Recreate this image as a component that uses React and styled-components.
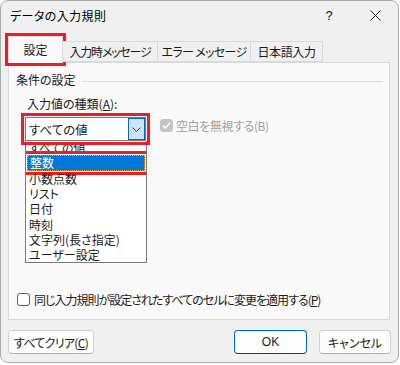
import React from 'react';
import styled, { createGlobalStyle } from 'styled-components';

const GlobalStyle = createGlobalStyle`
  * { box-sizing: border-box; }
  html, body { margin: 0; padding: 0; background: #ffffff; }
  body {
    font-family: "Noto Sans CJK JP", "Noto Sans", sans-serif;
    font-size: 12px;
    color: #1a1a1a;
    font-feature-settings: "palt";
  }
`;

const items = ['すべての値', '整数', '小数点数', 'リスト', '日付', '時刻', '文字列(長さ指定)', 'ユーザー設定'];
const tabs = [
  { label: '設定', w: 55, tight: 0 },
  { label: '入力時メッセージ', w: 96, tight: 1.2 },
  { label: 'エラー メッセージ', w: 94, tight: 0.7 },
  { label: '日本語入力', w: 73, tight: 0.4 },
];

const App = () => {
  return (
    <>
      <GlobalStyle />
      <Dialog>
        <TitleBar>
          <Title>データの入力規則</Title>
          <TitleButton>?</TitleButton>
          <TitleButton>
            <svg width="11" height="11" viewBox="0 0 11 11">
              <path d="M0.5 0.5 L10.5 10.5 M10.5 0.5 L0.5 10.5" stroke="#1a1a1a" strokeWidth="1" />
            </svg>
          </TitleButton>
        </TitleBar>

        <TabStrip>
          {tabs.map((t, i) => (
            <Tab key={t.label} $active={i === 0} $w={t.w} $tight={t.tight}>{t.label}</Tab>
          ))}
        </TabStrip>

        <Panel>
          <GroupHeader>
            <span>条件の設定</span>
            <GroupLine />
          </GroupHeader>

          <Indent>
            <FieldLabel>入力値の種類(<u>A</u>):</FieldLabel>
            <FieldRow>
              <ComboColumn>
                <Combo>
                  <ComboText>すべての値</ComboText>
                  <DropButton>
                    <svg width="9" height="5" viewBox="0 0 9 5">
                      <path d="M0.5 0.5 L4.5 4.5 L8.5 0.5" stroke="#3a3a3a" fill="none" strokeWidth="1" />
                    </svg>
                  </DropButton>
                </Combo>
                <ListBox>
                  <ListInner>
                    {items.map((it, i) => (
                      <ListItem key={it} $selected={i === 1}>{it}</ListItem>
                    ))}
                  </ListInner>
                </ListBox>
              </ComboColumn>
              <CheckOption $disabled>
                <CheckBox $checked $disabled>
                  <svg width="9" height="7" viewBox="0 0 9 7">
                    <path d="M0.8 3.5 L3.3 6 L8.2 0.8" stroke="#ffffff" fill="none" strokeWidth="1.4" />
                  </svg>
                </CheckBox>
                <span>空白を無視する(B)</span>
              </CheckOption>
            </FieldRow>
          </Indent>

          <BottomOption>
            <CheckBox />
            <span>同じ入力規則が設定されたすべてのセルに変更を適用する(<u>P</u>)</span>
          </BottomOption>
        </Panel>

        <ButtonRow>
          <Button $w={86} $tight={0.7}>すべてクリア(<u>C</u>)</Button>
          <Spacer />
          <Button $w={73} $primary>OK</Button>
          <Button $w={72}>キャンセル</Button>
        </ButtonRow>
      </Dialog>
    </>
  );
};

const Dialog = styled.div`
  width: 399px;
  height: 363px;
  background: #f0f0f0;
  border: 1px solid #a9a9a9;
  border-radius: 8px;
  display: flex;
  flex-direction: column;
  overflow: hidden;
`;

const TitleBar = styled.div`
  height: 29px;
  display: flex;
  align-items: center;
`;

const Title = styled.div`
  flex: 1;
  padding-left: 9px;
  font-size: 12px;
  letter-spacing: 0.4px;
  color: #000;
`;

const TitleButton = styled.div`
  width: 46px;
  height: 29px;
  display: flex;
  align-items: center;
  justify-content: center;
  font-family: "Liberation Sans", sans-serif;
  font-size: 13px;
  color: #1a1a1a;
`;

const TabStrip = styled.div`
  margin-top: 6px;
  height: 26px;
  padding-left: 7px;
  display: flex;
  align-items: flex-end;
  position: relative;
  z-index: 1;
`;

const Tab = styled.div`
  width: ${p => p.$w}px;
  height: ${p => (p.$active ? 27 : 21)}px;
  margin-bottom: ${p => (p.$active ? -1 : 0)}px;
  margin-right: -1px;
  background: ${p => (p.$active ? '#f9f9f9' : '#f0f0f0')};
  border: 1px solid #d9d9d9;
  border-bottom: ${p => (p.$active ? 'none' : '1px solid #d9d9d9')};
  display: flex;
  align-items: center;
  justify-content: center;
  padding-bottom: ${p => (p.$active ? 1 : 0)}px;
  white-space: pre;
  letter-spacing: ${p => -p.$tight}px;
  outline: ${p => (p.$active ? '3px solid #ee1c25' : 'none')};
  outline-offset: 0px;
`;

const Panel = styled.div`
  margin: 0 8px 0 7px;
  height: 258px;
  background: #f9f9f9;
  border: 1px solid #d9d9d9;
  display: flex;
  flex-direction: column;
`;

const GroupHeader = styled.div`
  margin-top: 10px;
  padding-left: 7px;
  padding-right: 6px;
  height: 14px;
  line-height: 14px;
  display: flex;
  align-items: center;
  gap: 6px;
`;

const GroupLine = styled.div`
  flex: 1;
  height: 1px;
  background: #dcdcdc;
  margin-top: 2px;
`;

const Indent = styled.div`
  padding-left: 16px;
  margin-top: 10px;
`;

const FieldLabel = styled.div`
  padding-left: 2px;
  height: 14px;
  line-height: 14px;
`;

const FieldRow = styled.div`
  margin-top: 6px;
  display: flex;
  align-items: flex-start;
  gap: 13px;
`;

const ComboColumn = styled.div`
  display: flex;
  flex-direction: column;
  width: 122px;
`;

const Combo = styled.div`
  width: 121px;
  height: 24px;
  background: #ffffff;
  border: 1px solid #7a7a7a;
  display: flex;
  align-items: center;
  position: relative;
  z-index: 2;
  outline: 3px solid #ee1c25;
  outline-offset: 1px;
`;

const ComboText = styled.div`
  flex: 1;
  padding-left: 3px;
  font-size: 12.5px;
`;

const DropButton = styled.div`
  width: 17px;
  height: 22px;
  background: #cce4f7;
  border: 1px solid #0067c0;
  display: flex;
  align-items: center;
  justify-content: center;
`;

const ListBox = styled.div`
  width: 122px;
  height: 122px;
  background: #ffffff;
  border: 1px solid #7a7a7a;
  border-top: none;
  overflow: hidden;
`;

const ListInner = styled.div`
  margin-top: -1px;
  padding: 0 1px;
`;

const ListItem = styled.div`
  height: 15.3px;
  line-height: 13px;
  padding-left: 2px;
  white-space: nowrap;
  display: flex;
  align-items: center;
  color: ${p => (p.$selected ? '#ffffff' : '#1a1a1a')};
  background: ${p => (p.$selected ? '#0078d7' : 'transparent')};
  border: ${p => (p.$selected ? '1px dotted #f0a040' : 'none')};
  outline: ${p => (p.$selected ? '3px solid #ee1c25' : 'none')};
  outline-offset: 1px;
  position: relative;
`;

const CheckOption = styled.div`
  margin-top: 1px;
  height: 14px;
  display: flex;
  align-items: center;
  gap: 3px;
  letter-spacing: -0.4px;
  color: ${p => (p.$disabled ? '#a0a0a0' : '#1a1a1a')};
  white-space: nowrap;
`;

const CheckBox = styled.div`
  width: 13px;
  height: 13px;
  border-radius: 3px;
  border: 1px solid ${p => (p.$disabled ? '#c4c4c4' : '#5f5f5f')};
  background: ${p => (p.$checked ? '#c4c4c4' : '#ffffff')};
  display: flex;
  align-items: center;
  justify-content: center;
  flex-shrink: 0;
`;

const BottomOption = styled.div`
  margin-top: 29px;
  padding-left: 8px;
  height: 14px;
  display: flex;
  align-items: center;
  gap: 4px;
  letter-spacing: -1px;
  white-space: nowrap;
`;

const ButtonRow = styled.div`
  margin-top: 10px;
  padding: 0 7px;
  display: flex;
  gap: 12px;
`;

const Spacer = styled.div`
  flex: 1;
`;

const Button = styled.div`
  width: ${p => p.$w}px;
  height: 24px;
  background: #fdfdfd;
  border: 1px solid ${p => (p.$primary ? '#0067c0' : '#d0d0d0')};
  border-bottom-color: ${p => (p.$primary ? '#003e92' : '#b0b0b0')};
  border-radius: 4px;
  display: flex;
  align-items: center;
  justify-content: center;
  white-space: nowrap;
  letter-spacing: ${p => -(p.$tight || 0)}px;
  font-family: ${p => (p.$primary ? '"Liberation Sans", sans-serif' : 'inherit')};
`;

export default App;
